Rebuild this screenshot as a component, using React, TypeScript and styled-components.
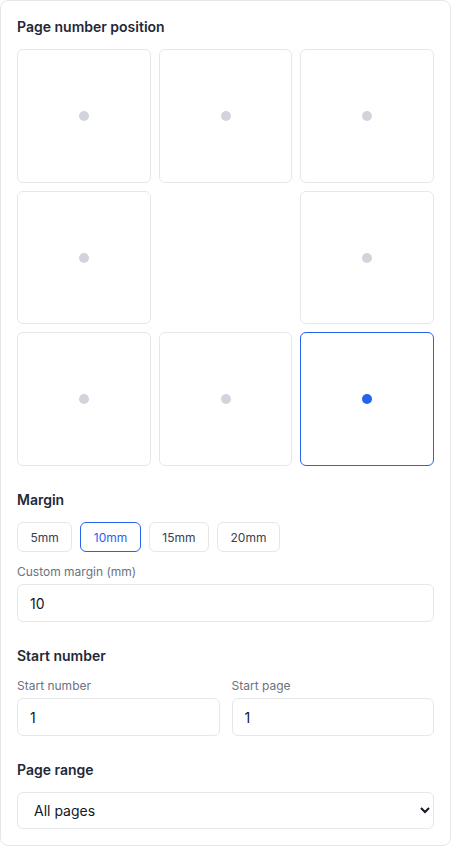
import React, { useState } from "react";
import styled, { createGlobalStyle } from "styled-components";

const GlobalStyle = createGlobalStyle`
  * { box-sizing: border-box; }
  body {
    margin: 0;
    background: #ffffff;
    font-family: Inter, "Noto Sans", sans-serif;
    color: #1f2937;
  }
`;

const Card = styled.div`
  width: 451px;
  border: 1px solid #e5e7eb;
  border-radius: 8px;
  padding: 16px;
  background: #fff;
  display: flex;
  flex-direction: column;
  gap: 24px;
`;

const Section = styled.section`
  display: flex;
  flex-direction: column;
`;

const Title = styled.h3`
  margin: 0 0 12px;
  font-size: 14px;
  line-height: 20px;
  font-weight: 600;
  color: #1f2937;
`;

const PositionGrid = styled.div`
  display: grid;
  grid-template-columns: repeat(3, 1fr);
  gap: 8px;
`;

const Cell = styled.button<{ $active?: boolean }>`
  aspect-ratio: 1 / 1;
  border: 1px solid ${(p) => (p.$active ? "#2563eb" : "#e5e7eb")};
  border-radius: 6px;
  background: #fff;
  display: flex;
  align-items: center;
  justify-content: center;
  cursor: pointer;
  padding: 0;
`;

const Blank = styled.div`
  aspect-ratio: 1 / 1;
`;

const Dot = styled.span<{ $active?: boolean }>`
  width: 10px;
  height: 10px;
  border-radius: 50%;
  background: ${(p) => (p.$active ? "#2563eb" : "#d1d5db")};
`;

const Presets = styled.div`
  display: flex;
  gap: 8px;
  margin-bottom: 12px;
`;

const Preset = styled.button<{ $active?: boolean }>`
  height: 30px;
  padding: 0 12.5px;
  border: 1px solid ${(p) => (p.$active ? "#2563eb" : "#e5e7eb")};
  border-radius: 6px;
  background: #fff;
  color: ${(p) => (p.$active ? "#2563eb" : "#374151")};
  font-family: inherit;
  font-size: 12px;
  cursor: pointer;
`;

const Field = styled.label`
  display: flex;
  flex-direction: column;
  gap: 4px;
  min-width: 0;
`;

const FieldLabel = styled.span`
  font-size: 12px;
  line-height: 16px;
  color: #6b7280;
`;

const Input = styled.input`
  width: 100%;
  height: 38px;
  padding: 0 12px;
  border: 1px solid #e5e7eb;
  border-radius: 6px;
  font-family: inherit;
  font-size: 14px;
  color: #111827;
  background: #fff;
  outline: none;
`;

const Row = styled.div`
  display: grid;
  grid-template-columns: 1fr 1fr;
  gap: 12px;
`;

const Select = styled.select`
  width: 100%;
  height: 37px;
  padding: 0 8px 0 12px;
  border: 1px solid #e5e7eb;
  border-radius: 6px;
  font-family: inherit;
  font-size: 14px;
  color: #111827;
  background: #fff;
`;

const positions = [
  "top-left",
  "top-center",
  "top-right",
  "middle-left",
  null,
  "middle-right",
  "bottom-left",
  "bottom-center",
  "bottom-right",
];

const margins = [5, 10, 15, 20];

export default function App() {
  const [position, setPosition] = useState("bottom-right");
  const [margin, setMargin] = useState(10);

  return (
    <>
      <GlobalStyle />
      <Card>
        <Section>
          <Title>Page number position</Title>
          <PositionGrid>
            {positions.map((pos, i) =>
              pos ? (
                <Cell
                  key={pos}
                  $active={pos === position}
                  onClick={() => setPosition(pos)}
                >
                  <Dot $active={pos === position} />
                </Cell>
              ) : (
                <Blank key={i} />
              )
            )}
          </PositionGrid>
        </Section>

        <Section>
          <Title>Margin</Title>
          <Presets>
            {margins.map((m) => (
              <Preset key={m} $active={m === margin} onClick={() => setMargin(m)}>
                {m}mm
              </Preset>
            ))}
          </Presets>
          <Field>
            <FieldLabel>Custom margin (mm)</FieldLabel>
            <Input
              type="text"
              value={margin}
              onChange={(e) => setMargin(Number(e.target.value) || 0)}
            />
          </Field>
        </Section>

        <Section>
          <Title>Start number</Title>
          <Row>
            <Field>
              <FieldLabel>Start number</FieldLabel>
              <Input type="text" defaultValue="1" />
            </Field>
            <Field>
              <FieldLabel>Start page</FieldLabel>
              <Input type="text" defaultValue="1" />
            </Field>
          </Row>
        </Section>

        <Section>
          <Title>Page range</Title>
          <Select defaultValue="all">
            <option value="all">All pages</option>
            <option value="odd">Odd pages</option>
            <option value="even">Even pages</option>
          </Select>
        </Section>
      </Card>
    </>
  );
}
